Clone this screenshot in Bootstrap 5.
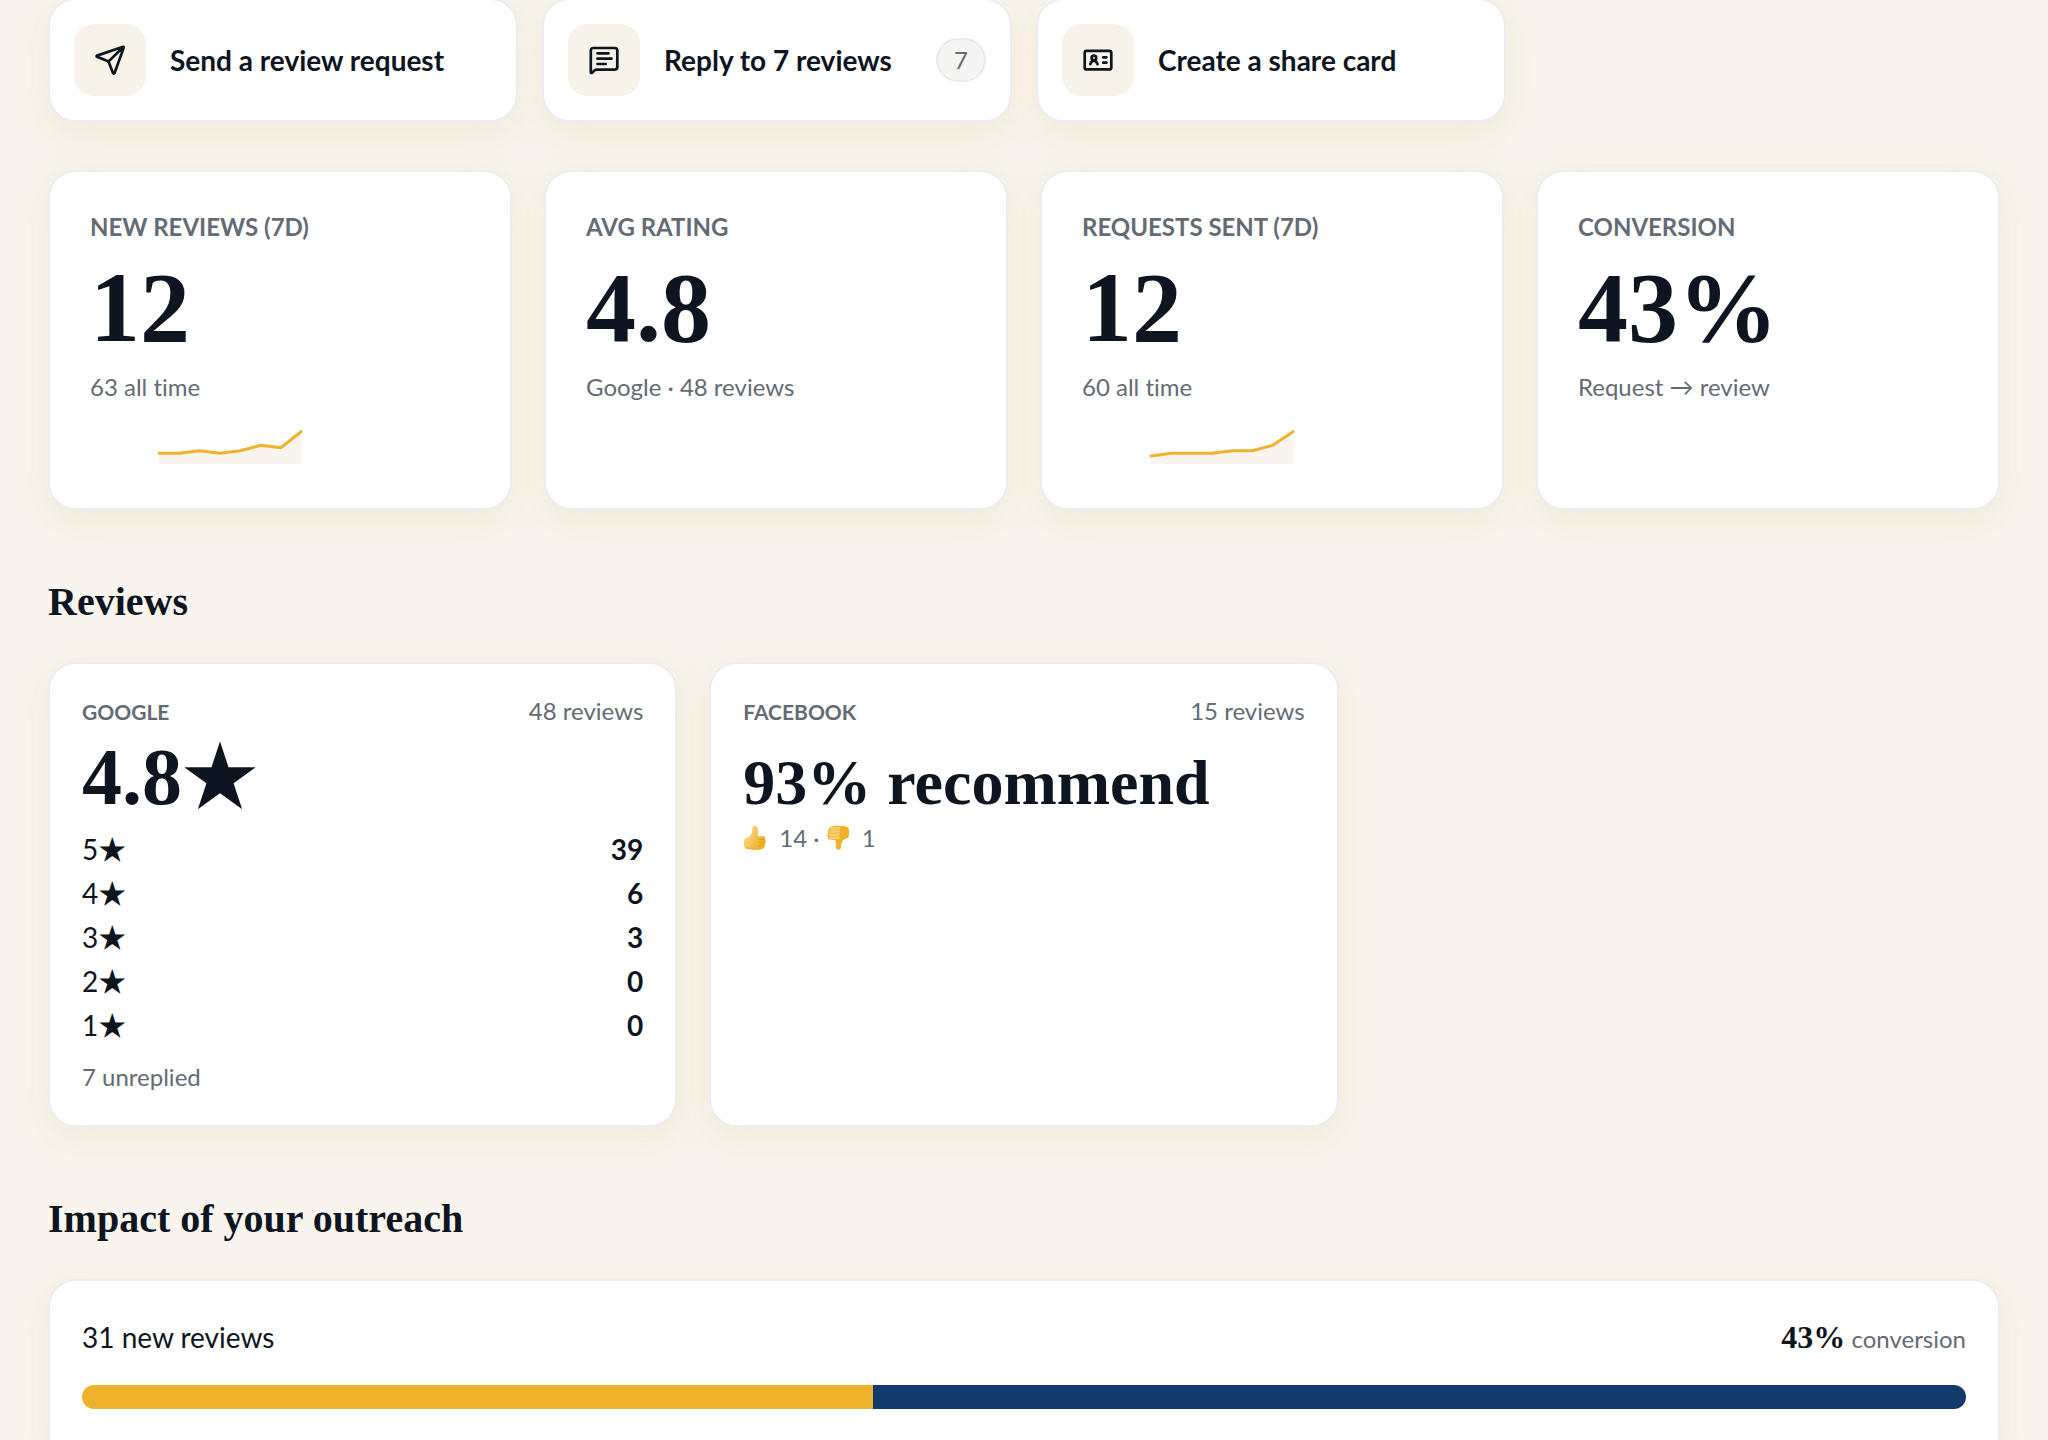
<!DOCTYPE html>
<html lang="en">
<head>
<meta charset="utf-8">
<meta name="viewport" content="width=device-width, initial-scale=1">
<title>Reviews dashboard</title>
<link href="https://cdn.jsdelivr.net/npm/bootstrap@5.3.0/dist/css/bootstrap.min.css" rel="stylesheet">
<style>
:root{--ink:#0d1521;--muted:#636b74;--line:#ebedf0;--paper:#f9f4ed;--gold:#eeb22d;--navy:#133a6d}
body{background:var(--paper);color:var(--ink);font-family:Lato,"Noto Sans CJK JP",sans-serif;font-size:28px;line-height:36px;font-variant-ligatures:none;height:100vh;overflow:hidden}
.page{min-height:100vh;padding:0 48px;margin-top:-2px}
.panel{background:#fff;border:2px solid var(--line);border-radius:28px;box-shadow:0 12px 32px rgba(13,21,33,.03),0 10px 28px 10px rgba(246,241,222,.6)}
.panel-pad{padding:32px}
.wide-gap{--bs-gutter-x:32px;--bs-gutter-y:32px}
.stats-row{padding-top:48px}
.serif{font-family:"Liberation Serif",serif;font-weight:700}
.quiet{color:var(--muted);font-size:24px;line-height:30px}
.action{padding:24px;gap:24px;color:var(--ink);font-weight:700}
.action-icon{width:72px;height:72px;border-radius:20px;background:#f8f3e8}
.action-icon svg{width:36px;height:36px;fill:none;stroke:currentColor;stroke-width:2.7;stroke-linecap:round;stroke-linejoin:round}
.count{min-width:50px;height:44px;border:2px solid #ebebeb;border-radius:22px;background:#f5f5f4;color:var(--muted);font-size:24px;line-height:40px;font-weight:400}
.stat{padding:40px}
.eyebrow{color:var(--muted);font-weight:700;font-size:24px;line-height:30px;text-transform:uppercase}
.eyebrow-sm{font-size:21px}
.figure-xl{font-size:100px;line-height:100px;margin:16px 0 14px}
.figure-lg{font-size:80px;line-height:80px;margin-top:10px}
.figure-lg .star{font:400 76px/1 "Noto Sans CJK JP",sans-serif;line-height:0}
.figure-md{font-size:64px;line-height:64px;margin:24px 0 8px}
.spark{height:40px;margin-top:26px;width:280px}
.section-title{font-family:"Liberation Serif",serif;font-weight:700;font-size:40px;line-height:52px;margin:66px 0 34px}
.breakdown{display:flex;flex-direction:column;gap:8px;margin:14px 0 18px}
.foot{line-height:32px}
.thumb{width:24px;height:26px;margin-right:12px;vertical-align:-4px}
.outreach{border-bottom:0;border-radius:28px 28px 0 0;flex:1 0 auto}
.outreach-head{line-height:48px;margin-bottom:24px}
.rate{font-size:32px;color:var(--ink)}
.split{height:24px;border-radius:12px}
.split-gold{background:var(--gold)}
.split-navy{background:var(--navy)}
</style>
</head>
<body>
<main class="page d-flex flex-column">
  <nav class="row row-cols-1 row-cols-md-2 row-cols-xl-4 g-4" aria-label="Quick actions">
    <div class="col">
      <a class="panel action d-flex align-items-center text-decoration-none" href="#request">
        <span class="action-icon d-flex align-items-center justify-content-center flex-shrink-0">
          <svg viewBox="0 0 36 36" aria-hidden="true"><path d="M31.2 4.8 5 13.6Q4.200 14.200 5 14.800L15.500 19q1 .4 1.400 1.400L21 31q.8 1.200 1.600 0L31.800 5.400Q31.900 4.600 31.200 4.800ZM31 5.200 16.700 19.400"/></svg>
        </span>
        <span>Send a review request</span>
      </a>
    </div>
    <div class="col">
      <a class="panel action d-flex align-items-center text-decoration-none" href="#replies">
        <span class="action-icon d-flex align-items-center justify-content-center flex-shrink-0">
          <svg viewBox="0 0 36 36" aria-hidden="true"><path d="M4.800 30V8.500a2.500 2.500 0 0 1 2.500-2.500h21.500a2.500 2.500 0 0 1 2.500 2.500v16.600a2.500 2.500 0 0 1-2.500 2.500H10.500a3 3 0 0 0-2 .8l-2.200 2.200q-1.500 1-1.500-.6ZM11.500 11.300h11M11.500 16.700h14M11.500 22h8.200"/></svg>
        </span>
        <span>Reply to 7 reviews</span>
        <span class="count ms-auto text-center">7</span>
      </a>
    </div>
    <div class="col">
      <a class="panel action d-flex align-items-center text-decoration-none" href="#share">
        <span class="action-icon d-flex align-items-center justify-content-center flex-shrink-0">
          <svg viewBox="0 0 36 36" aria-hidden="true"><rect x="4.700" y="8.800" width="26.600" height="18.600" rx="2"/><circle cx="13.900" cy="15.900" r="2.300"/><path d="M10.300 22.200c.6-2 1.700-3.600 3.600-3.600s3 1.600 3.600 3.600M23.200 15.300h3.200M23.200 20.700h3.200"/></svg>
        </span>
        <span>Create a share card</span>
      </a>
    </div>
  </nav>

  <section class="stats-row" aria-label="Key figures">
    <div class="row row-cols-1 row-cols-md-2 row-cols-xl-4 wide-gap gy-0">
      <div class="col">
        <div class="panel stat h-100">
          <div class="eyebrow">New reviews (7d)</div>
          <div class="serif figure-xl">12</div>
          <div class="quiet">63 all time</div>
          <svg class="spark d-block" viewBox="0 0 280 40" aria-hidden="true"><path fill="#f9f4ed" d="M69 25.300H89.300L109.600 22.700 129.900 25.300 150.200 22.700 170.500 17.300 190.800 19.700 211 3.700V36H69Z"/><path fill="none" stroke="#eeb22d" stroke-width="3" stroke-linecap="round" stroke-linejoin="round" d="M69 25.300H89.300L109.600 22.700 129.900 25.300 150.200 22.700 170.500 17.300 190.800 19.700 211 3.700"/></svg>
        </div>
      </div>
      <div class="col">
        <div class="panel stat h-100">
          <div class="eyebrow">Avg rating</div>
          <div class="serif figure-xl">4.8</div>
          <div class="quiet">Google · 48 reviews</div>
        </div>
      </div>
      <div class="col">
        <div class="panel stat h-100">
          <div class="eyebrow">Requests sent (7d)</div>
          <div class="serif figure-xl">12</div>
          <div class="quiet">60 all time</div>
          <svg class="spark d-block" viewBox="0 0 280 40" aria-hidden="true"><path fill="#f9f4ed" d="M69 28 89.300 25.300H129.900L150.200 22.700H170.500L190.800 17.300 211 3.700V36H69Z"/><path fill="none" stroke="#eeb22d" stroke-width="3" stroke-linecap="round" stroke-linejoin="round" d="M69 28 89.300 25.300H129.900L150.200 22.700H170.500L190.800 17.300 211 3.700"/></svg>
        </div>
      </div>
      <div class="col">
        <div class="panel stat h-100">
          <div class="eyebrow">Conversion</div>
          <div class="serif figure-xl">43%</div>
          <div class="quiet">Request → review</div>
        </div>
      </div>
    </div>
  </section>

  <section>
    <h2 class="section-title">Reviews</h2>
    <div class="row row-cols-1 row-cols-lg-3 wide-gap gy-0">
      <div class="col">
        <div class="panel panel-pad h-100">
          <div class="d-flex justify-content-between align-items-baseline">
            <span class="eyebrow eyebrow-sm">Google</span>
            <span class="quiet">48 reviews</span>
          </div>
          <div class="serif figure-lg">4.8<span class="star">★</span></div>
          <div class="breakdown">
            <div class="d-flex justify-content-between"><span>5★</span><strong>39</strong></div>
            <div class="d-flex justify-content-between"><span>4★</span><strong>6</strong></div>
            <div class="d-flex justify-content-between"><span>3★</span><strong>3</strong></div>
            <div class="d-flex justify-content-between"><span>2★</span><strong>0</strong></div>
            <div class="d-flex justify-content-between"><span>1★</span><strong>0</strong></div>
          </div>
          <div class="quiet foot">7 unreplied</div>
        </div>
      </div>
      <div class="col">
        <div class="panel panel-pad h-100">
          <div class="d-flex justify-content-between align-items-baseline">
            <span class="eyebrow eyebrow-sm">Facebook</span>
            <span class="quiet">15 reviews</span>
          </div>
          <div class="serif figure-md">93% recommend</div>
          <div class="quiet">
            <svg class="thumb" viewBox="0 0 24 26" role="img" aria-label="Thumbs up"><defs><linearGradient id="skin" x1="0" y1="0" x2="1" y2="0.500"><stop offset=".35" stop-color="#f7cf72"/><stop offset=".9" stop-color="#eeb22d"/></linearGradient></defs><path fill="url(#skin)" d="M9.500 2.500c.5-2 4-2 5 0 .8 2.500.5 6 .3 8.500l6 .2c1.700.3 1.900 2.300 1.200 3.300 1.100 1 .9 2.600 0 3.300.7 1 .4 2.300-.5 3 .4 1.500-.3 2.500-1.500 2.900-3 1.300-8 1.500-11 .3-2.500.4-5.500 0-7.500-1C.6 20 .6 16.500 1.700 13.500c2-.8 4-1 5.300-2.400C9 8.800 9.500 6 9.500 2.500Z"/><path fill="none" stroke="#d99f2b" stroke-width=".9" stroke-linecap="round" d="M16 14.500h5.500M16 17.800h5.300M16 20.800h4.500"/><path fill="none" stroke="#eeb22d" stroke-width="1.500" stroke-linecap="round" d="M4 23.300c4 .2 9 1.500 14 0"/></svg>14 · <svg class="thumb" viewBox="0 0 24 26" role="img" aria-label="Thumbs down"><path fill="#eeb22d" d="M10 22.500c.5 3 4.500 3 5 0 .1-3 .3-5 2-7 1.500-1.700 3.500-2 5.300-2.500 1-3 1-7.500.2-10C20 1 17 .8 14.500 1.200 11 .3 7 .8 4 2.200c-1.200.5-1.600 1.500-1.200 2.700-1 .8-1.300 2-.6 3C1 9 1 10.500 2 11.400c-.7 1.200-.2 3 1.500 3.200L9.300 15c.4 2 .8 5 .7 7.500Z"/><path fill="none" stroke="#f7cf72" stroke-width="2.500" stroke-linecap="round" d="M5 3.800 13 3M4 6.800l9-.6M3.600 9.900l9-.5M4 12.900l8.500-.3"/></svg>1
          </div>
        </div>
      </div>
    </div>
  </section>

  <section class="d-flex flex-column flex-grow-1">
    <h2 class="section-title">Impact of your outreach</h2>
    <div class="panel panel-pad outreach">
      <div class="outreach-head d-flex justify-content-between align-items-baseline">
        <span>31 new reviews</span>
        <span class="quiet"><strong class="serif rate">43%</strong> conversion</span>
      </div>
      <div class="split d-flex overflow-hidden" role="img" aria-label="31 of 74 requests">
        <div class="split-gold" style="width:42%"></div>
        <div class="split-navy flex-grow-1"></div>
      </div>
    </div>
  </section>
</main>
<script src="https://cdn.jsdelivr.net/npm/bootstrap@5.3.0/dist/js/bootstrap.bundle.min.js"></script>
</body>
</html>
